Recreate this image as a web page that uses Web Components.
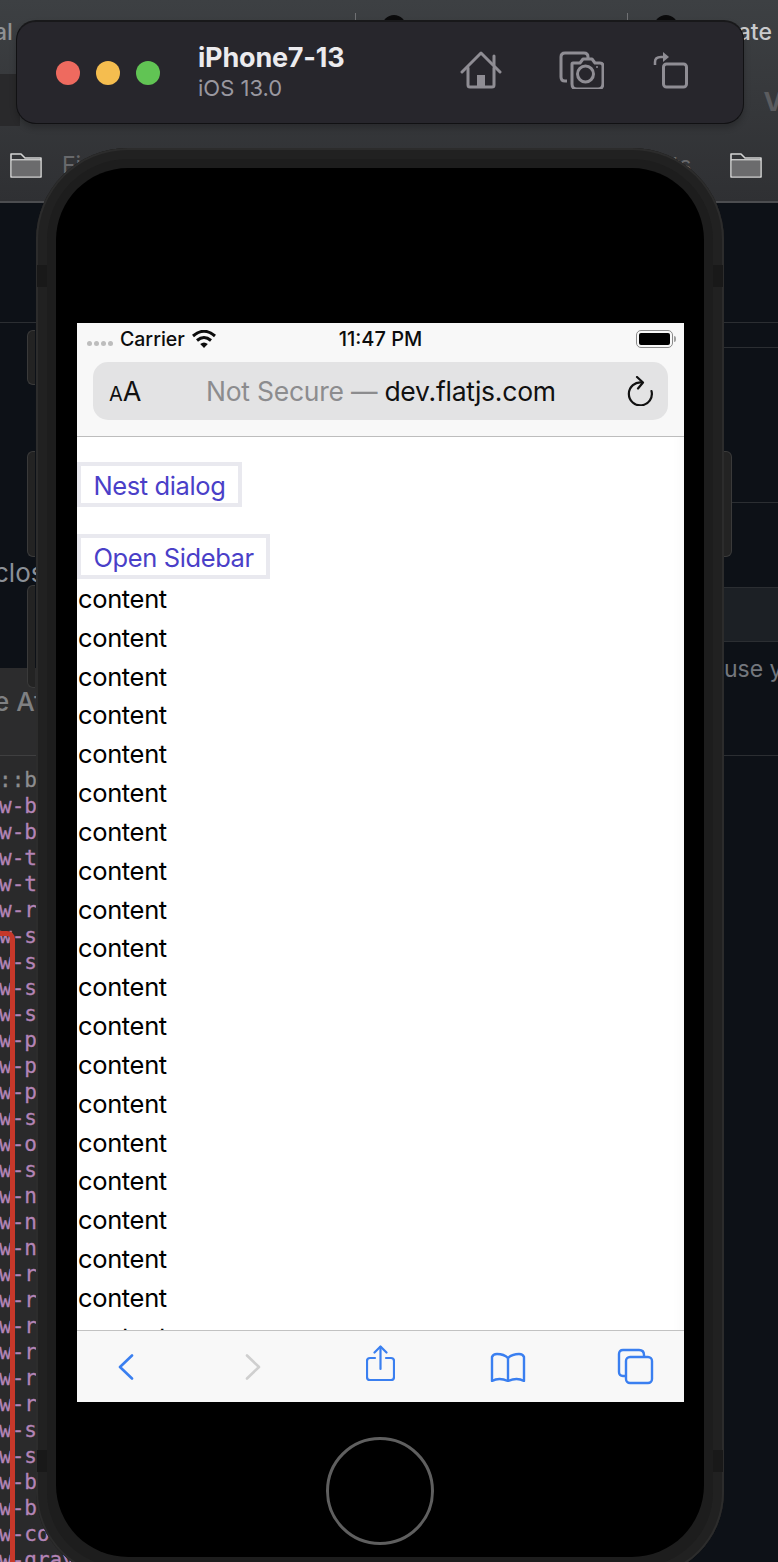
<!DOCTYPE html>
<html>
<head>
<meta charset="utf-8">
<title>iPhone7-13</title>
<style>
	html, body { margin: 0; padding: 0; background: #0d1117; }
	body { width: 778px; height: 1562px; overflow: hidden; font-family: Inter, "Liberation Sans", sans-serif; }
</style>
</head>
<body>
<sim-desktop>
	<sim-toolbar name="iPhone7-13" os="iOS 13.0"></sim-toolbar>
	<sim-phone>
		<safari-screen>
			<outline-button>Nest dialog</outline-button>
			<outline-button class="second">Open Sidebar</outline-button>
			<content-rows count="20"></content-rows>
		</safari-screen>
	</sim-phone>
</sim-desktop>

<script>
const ICON_GREY = '#8f8d94';
const SAFARI_BLUE = '#3a7ff0';

// the editor windows behind the simulator
class CodeList extends HTMLElement {
	constructor() {
		super();
		this.attachShadow({ mode: 'open' });
		const rows = ['::b', 'w-b', 'w-b', 'w-t', 'w-t', 'w-r', 'w-s', 'w-s', 'w-s', 'w-s', 'w-p', 'w-p', 'w-p', 'w-s', 'w-o', 'w-s',
			'w-n', 'w-n', 'w-n', 'w-r', 'w-r', 'w-r', 'w-r', 'w-r', 'w-r', 'w-s', 'w-s', 'w-b', 'w-b', 'w-co', 'w-gray'];
		this.shadowRoot.innerHTML = `
			<style>
				:host {
					display: block;
					position: relative;
					flex: 1;
					background: #2a2a2b;
					border-top: 1px solid #3f3f40;
					padding: 11px 0 0;
					overflow: hidden;
					font: 21px/26px "DejaVu Sans Mono", monospace;
					color: #b384b6;
					-webkit-text-stroke: .3px #b384b6;
				}
				div { margin-left: -1px; white-space: pre; }
				.muted { color: #8d8d8f; -webkit-text-stroke: .3px #8d8d8f; }
				.mark {
					position: absolute;
					left: -14px;
					top: 175px;
					width: 19px;
					height: 700px;
					border: 5px solid #c6382a;
					border-radius: 8px;
				}
			</style>
			${rows.map((r, i) => `<div class="${i == 0 ? 'muted' : ''}">${r}</div>`).join('')}
			<span class="mark"></span>
		`;
	}
}
customElements.define('code-list', CodeList);

class FolderIcon extends HTMLElement {
	constructor() {
		super();
		this.attachShadow({ mode: 'open' });
		this.shadowRoot.innerHTML = `
			<style>:host { display: block; width: 32px; height: 25px; } svg { display: block; }</style>
			<svg width="32" height="25" viewBox="0 0 32 25">
				<path d="M1 1h10l4 4h16v19H1z" fill="none" stroke="#d4d4d4" stroke-width="1.6" stroke-linejoin="round"/>
				<path d="M1.8 7.5h28.4v15.7H1.8z" fill="#6b6b6d"/>
				<path d="M1 6.8h30" stroke="#d4d4d4" stroke-width="1.4"/>
			</svg>
		`;
	}
}
customElements.define('folder-icon', FolderIcon);

class SimDesktop extends HTMLElement {
	constructor() {
		super();
		this.attachShadow({ mode: 'open' });
		this.shadowRoot.innerHTML = `
			<style>
				:host {
					display: flex;
					flex-direction: column;
					position: relative;
					width: 778px;
					height: 1562px;
					overflow: hidden;
					background: #0d1117;
					font-family: Inter, "Liberation Sans", sans-serif;
				}
				.top {
					position: relative;
					height: 203px;
					box-sizing: border-box;
					background: linear-gradient(#3d4043, #2f3033);
					border-bottom: 2px solid #4c4d50;
				}
				.patch { position: absolute; left: 0; top: 74px; width: 20px; height: 52px; background: #29292b; }
				.tabs { display: flex; height: 46px; padding: 20px 6px 0 0; justify-content: space-between; font-size: 23px; font-weight: 500; line-height: 24px; color: #c9cacc; }
				.tabs span:first-child { margin-left: -6px; color: #8f9194; }
				.folders { display: flex; justify-content: space-between; padding: 87px 16px 0 10px; position: relative; }
				.folder-label { position: absolute; top: 151px; font-size: 23px; line-height: 28px; color: #68696c; }
				.fi { left: 62px; }
				.ts { left: 672px; }
				.v { position: absolute; right: -5px; top: 86px; font-size: 26px; font-weight: 700; color: #5b5c5f; }
				.tick { position: absolute; top: 13px; width: 1px; height: 8px; background: #707174; }
				.dot { position: absolute; top: 15px; width: 24px; height: 24px; border-radius: 50%; background: #0b0b0c; }
				.cols { flex: 1; display: flex; min-height: 0; }
				.left, .right { flex: 1; display: flex; flex-direction: column; min-width: 0; }
				.dark { height: 465px; box-sizing: border-box; position: relative; }
				.left .dark { flex: none; }
				.rule { height: 1px; background: #2b2e32; }
				.clos { position: absolute; left: -6px; top: 355px; font-size: 26px; line-height: 30px; color: #8b9097; }
				.attr { height: 87px; flex: none; box-sizing: border-box; background: #2c2c2d; font-size: 26px; font-weight: 500; line-height: 30px; color: #7f8082; padding: 19px 0 0; text-indent: -6px; }
				.r-a { height: 119px; flex: none; }
				.r-b { height: 24px; flex: none; }
				.r-c { height: 154px; flex: none; }
				.r-d { height: 84px; flex: none; }
				.band { height: 53px; flex: none; background: #1c2025; border-top: 1px solid #2b2e32; }
				.use { height: 115px; flex: none; border-top: 1px solid #2b2e32; border-bottom: 1px solid #2b2e32; box-sizing: border-box; font-size: 23px; line-height: 30px; color: #73777d; padding: 12px 0 0 335px; white-space: nowrap; overflow: hidden; }
			</style>
			<div class="top">
				<span class="patch"></span>
				<span class="tick" style="left:355px"></span>
				<span class="tick" style="left:627px"></span>
				<span class="dot" style="left:382px"></span>
				<span class="dot" style="left:654px"></span>
				<div class="tabs"><span>al</span><span>ate</span></div>
				<div class="folders"><folder-icon></folder-icon><folder-icon></folder-icon></div>
				<span class="folder-label fi">Fi</span>
				<span class="folder-label ts">ts</span>
				<span class="v">V</span>
			</div>
			<div class="cols">
				<div class="left">
					<div class="dark">
						<div style="height:119px"></div>
						<div class="rule"></div>
						<span class="clos">clos</span>
					</div>
					<div class="attr">e At</div>
					<code-list></code-list>
				</div>
				<div class="right">
					<div class="r-a"></div>
					<div class="rule"></div>
					<div class="r-b"></div>
					<div class="rule"></div>
					<div class="r-c"></div>
					<div class="rule"></div>
					<div class="r-d"></div>
					<div class="band"></div>
					<div class="use">use y</div>
				</div>
			</div>
			<slot></slot>
		`;
	}
}
customElements.define('sim-desktop', SimDesktop);

// floating simulator title bar
class SimToolbar extends HTMLElement {
	constructor() {
		super();
		this.attachShadow({ mode: 'open' });
		this.shadowRoot.innerHTML = `
			<style>
				:host {
					position: absolute;
					left: 16px;
					top: 20px;
					width: 728px;
					height: 104px;
					box-sizing: border-box;
					display: flex;
					align-items: center;
					padding: 0 54px 0 39px;
					background: #27262c;
					border: 1px solid #111113;
					border-top: 2px solid #18181a;
					border-radius: 20px;
					box-shadow: 0 4px 6px rgba(0, 0, 0, .22);
				}
				.lights { display: flex; gap: 16px; margin-right: 38px; }
				.lights i { width: 24px; height: 24px; border-radius: 50%; }
				.names { flex: 1; display: flex; flex-direction: column; }
				b { font-size: 27px; line-height: 30px; font-weight: 700; color: #ecebee; letter-spacing: -.2px; }
				small { font-size: 22px; line-height: 27px; margin-top: 2px; color: #9a98a0; }
				.tools { display: flex; align-items: center; margin-bottom: 6px; }
				svg { display: block; }
			</style>
			<div class="lights">
				<i style="background:#ee6a5f"></i>
				<i style="background:#f5bd4f"></i>
				<i style="background:#61c454"></i>
			</div>
			<div class="names"><b>${this.getAttribute('name')}</b><small>${this.getAttribute('os')}</small></div>
			<div class="tools">
				<svg width="42" height="38" viewBox="0 0 42 38" fill="none" stroke="${ICON_GREY}" stroke-width="3" stroke-linecap="round" stroke-linejoin="round">
					<path d="M2 21 21 2l19 19"/>
					<path d="M34 14V5"/>
					<path d="M8 17v17q0 2 2 2h22q2 0 2-2V17"/>
					<path d="M17 36V24h8v12z" fill="${ICON_GREY}" stroke="none"/>
				</svg>
				<svg style="margin-left:57px" width="45" height="38" viewBox="0 0 45 38" fill="none" stroke="${ICON_GREY}" stroke-width="3" stroke-linejoin="round">
					<path d="M8 30H6q-4 0-4-4V6q0-4 4-4h19q4 0 4 4v3"/>
					<path d="M13 13q0-1 1-1h7l3-4h9l3 4h5q3 0 3 3v17q0 6-5 6H18q-5 0-5-5z"/>
					<circle cx="26.500" cy="23" r="8"/>
					<circle cx="38" cy="16" r="1" fill="${ICON_GREY}" stroke="none"/>
				</svg>
				<svg style="margin-left:49px" width="36" height="38" viewBox="0 0 36 38" fill="none" stroke="${ICON_GREY}" stroke-width="3" stroke-linejoin="round">
					<rect x="10.500" y="13" width="23" height="23" rx="3"/>
					<path d="M2 14V11Q2 6 8 6h2" stroke-width="2.500"/>
					<path d="M10 1l6 5-6 5z" fill="${ICON_GREY}" stroke="none"/>
				</svg>
			</div>
		`;
	}
}
customElements.define('sim-toolbar', SimToolbar);

class SimPhone extends HTMLElement {
	constructor() {
		super();
		this.attachShadow({ mode: 'open' });
		this.shadowRoot.innerHTML = `
			<style>
				:host {
					position: absolute;
					left: 36px;
					top: 148px;
					width: 688px;
					height: 1430px;
					box-sizing: border-box;
					padding: 20px 20px 0;
					background: #1d1d1d;
					border-radius: 92px 92px 86px 86px;
					box-shadow: inset 0 0 0 2px #2c2c2c, inset 0 0 0 11px #212121;
				}
				.glass {
					height: 1389px;
					box-sizing: border-box;
					padding: 155px 20px 0 21px;
					background: #000;
					border-radius: 72px;
				}
				.key { position: absolute; width: 8px; background: #232323; border: 1px solid #3a3a3a; box-sizing: border-box; }
				.left { left: -9px; border-right: 0; border-radius: 6px 0 0 6px; }
				.right { right: -8px; border-left: 0; border-radius: 0 6px 6px 0; }
				.gap { position: absolute; width: 10px; height: 22px; background: #191919; }
				.home {
					display: block;
					box-sizing: border-box;
					width: 108px;
					height: 108px;
					margin: 35px 0 0 249px;
					border: 3px solid #5f5f5f;
					border-radius: 50%;
				}
			</style>
			<span class="key left" style="top:182px;height:55px"></span>
			<span class="key left" style="top:303px;height:106px"></span>
			<span class="key left" style="top:437px;height:103px"></span>
			<span class="key right" style="top:303px;height:106px"></span>
			<span class="gap" style="left:1px;top:117px"></span>
			<span class="gap" style="right:1px;top:117px"></span>
			<span class="gap" style="left:1px;top:1302px"></span>
			<span class="gap" style="right:1px;top:1302px"></span>
			<div class="glass">
				<slot></slot>
				<span class="home"></span>
			</div>
		`;
	}
}
customElements.define('sim-phone', SimPhone);

class StatusBar extends HTMLElement {
	constructor() {
		super();
		this.attachShadow({ mode: 'open' });
		this.shadowRoot.innerHTML = `
			<style>
				:host {
					display: grid;
					grid-template-columns: 1fr auto 1fr;
					align-items: center;
					height: 31px;
					padding: 0 8px 0 10px;
					font-size: 19.500px;
					font-weight: 500;
					color: #0c0c0c;
				}
				.l { display: flex; align-items: center; }
				.sig { display: flex; gap: 2px; margin: 9px 7px 0 0; }
				.sig i { width: 5px; height: 5px; border-radius: 50%; background: #bdbdbd; }
				.wifi { margin: 0 0 0 7px; }
				.time { font-size: 20px; margin-left: -2px; }
				.bat { justify-self: end; display: flex; align-items: center; gap: 1px; }
				.shell { box-sizing: border-box; width: 37px; height: 18px; padding: 2px; border: 1.500px solid #8a8a8a; border-radius: 5px; }
				.shell i { display: block; height: 100%; background: #000; border-radius: 2px; }
				.nub { width: 2px; height: 6px; background: #a0a0a0; border-radius: 0 2px 2px 0; }
				svg { display: block; }
			</style>
			<div class="l">
				<span class="sig"><i></i><i></i><i></i><i></i></span>
				<span>Carrier</span>
				<svg class="wifi" width="24" height="18" viewBox="0 0 24 18" fill="none" stroke="#0c0c0c" stroke-width="3">
					<path d="M1 6q11-9.500 22 0"/>
					<path d="M5 10.500q7-6 14 0"/>
					<path d="M12 18l-3.800-4q3.800-3 7.600 0z" fill="#0c0c0c" stroke="none"/>
				</svg>
			</div>
			<span class="time">11:47 PM</span>
			<div class="bat"><span class="shell"><i></i></span><span class="nub"></span></div>
		`;
	}
}
customElements.define('status-bar', StatusBar);

class AddressBar extends HTMLElement {
	constructor() {
		super();
		this.attachShadow({ mode: 'open' });
		this.shadowRoot.innerHTML = `
			<style>
				:host {
					display: flex;
					align-items: center;
					height: 58px;
					margin: 8px 16px 0;
					padding: 0 14px 0 16px;
					background: #e3e3e4;
					border-radius: 15px;
					color: #111;
				}
				.aa { width: 97px; font-size: 27px; line-height: 30px; padding-top: 3px; }
				.aa small { font-size: 20px; }
				.url { flex: 1; font-size: 26.500px; white-space: nowrap; letter-spacing: -.25px; }
				.url span { color: #8c8c8e; }
				svg { display: block; }
			</style>
			<span class="aa"><small>A</small>A</span>
			<span class="url"><span>Not Secure — </span>dev.flatjs.com</span>
			<svg width="28" height="30" viewBox="0 0 28 30" fill="none" stroke="#111" stroke-width="2.200" stroke-linecap="round" stroke-linejoin="round">
				<path d="M16 6.500A11.500 11.500 0 1 0 25.500 15"/>
				<path d="M11 1l6 5.500-5 6"/>
			</svg>
		`;
	}
}
customElements.define('address-bar', AddressBar);

class SafariBottom extends HTMLElement {
	constructor() {
		super();
		this.attachShadow({ mode: 'open' });
		this.shadowRoot.innerHTML = `
			<style>
				:host {
					display: grid;
					grid-template-columns: repeat(5, 127.500px);
					justify-content: center;
					justify-items: center;
					align-items: center;
					flex: none;
					height: 72px;
					box-sizing: border-box;
					background: #f8f8f8;
					border-top: 1px solid #c2c2c2;
				}
				svg { display: block; }
			</style>
			<svg width="16" height="26" viewBox="0 0 16 26" fill="none" stroke="${SAFARI_BLUE}" stroke-width="2.600" stroke-linecap="round" stroke-linejoin="round"><path d="M14 1.500 2 13l12 11.500"/></svg>
			<svg width="16" height="26" viewBox="0 0 16 26" fill="none" stroke="#cfcfcf" stroke-width="2.600" stroke-linecap="round" stroke-linejoin="round"><path d="M2 1.500 14 13 2 24.500"/></svg>
			<svg style="margin-bottom:6px" width="29" height="37" viewBox="0 0 29 37" fill="none" stroke="${SAFARI_BLUE}" stroke-width="2.200" stroke-linecap="round" stroke-linejoin="round">
				<path d="M9 13H4q-3 0-3 3v16q0 3 3 3h21q3 0 3-3V16q0-3-3-3h-5"/>
				<path d="M14.500 24V2"/>
				<path d="M8.500 7.500l6-6 6 6"/>
			</svg>
			<svg width="36" height="30" viewBox="0 0 36 30" fill="none" stroke="${SAFARI_BLUE}" stroke-width="2.400" stroke-linejoin="round">
				<path d="M18 6Q14 2 7 2 3 2 2 5v24q7-4 16 0 9-4 16 0V5q-1-3-5-3-7 0-11 4z"/>
				<path d="M18 6v23"/>
			</svg>
			<svg width="37" height="37" viewBox="0 0 37 37" fill="none" stroke="${SAFARI_BLUE}" stroke-width="2.400" stroke-linejoin="round">
				<path d="M8 28H6q-4 0-4-4V6q0-4 4-4h16q5 0 5 5v2"/>
				<rect x="9" y="9" width="26" height="26" rx="4"/>
			</svg>
		`;
	}
}
customElements.define('safari-bottom', SafariBottom);

class SafariScreen extends HTMLElement {
	constructor() {
		super();
		this.attachShadow({ mode: 'open' });
		this.shadowRoot.innerHTML = `
			<style>
				:host {
					display: flex;
					flex-direction: column;
					width: 607px;
					height: 1079px;
					overflow: hidden;
					background: #fff;
				}
				header { flex: none; height: 114px; box-sizing: border-box; background: #f8f8f8; border-bottom: 1px solid #bdbdbd; }
				main { flex: 1; min-height: 0; overflow: hidden; padding-top: 25px; box-sizing: border-box; box-shadow: inset -14px 0 14px -14px rgba(0, 0, 0, .05); }
			</style>
			<header>
				<status-bar></status-bar>
				<address-bar></address-bar>
			</header>
			<main><slot></slot></main>
			<safari-bottom></safari-bottom>
		`;
	}
}
customElements.define('safari-screen', SafariScreen);

class OutlineButton extends HTMLElement {
	constructor() {
		super();
		this.attachShadow({ mode: 'open' });
		this.shadowRoot.innerHTML = `
			<style>
				:host {
					display: block;
					width: fit-content;
					height: 45px;
					box-sizing: border-box;
					padding: 0 12.500px;
					border: 4px solid #e9e9ef;
					font-size: 25.500px;
					letter-spacing: -.4px;
					line-height: 39px;
					color: #4a3fc8;
				}
				:host(.second) { margin-top: 27px; }
			</style>
			<slot></slot>
		`;
	}
}
customElements.define('outline-button', OutlineButton);

class ContentRows extends HTMLElement {
	constructor() {
		super();
		this.attachShadow({ mode: 'open' });
		const n = Number(this.getAttribute('count')) || 0;
		this.shadowRoot.innerHTML = `
			<style>
				:host { display: block; padding: 1px 0 0 1px; font-size: 25.500px; letter-spacing: -.35px; line-height: 38.830px; color: #000; }
			</style>
			${Array.from({ length: n }, () => '<div>content</div>').join('')}
		`;
	}
}
customElements.define('content-rows', ContentRows);
</script>
</body>
</html>
